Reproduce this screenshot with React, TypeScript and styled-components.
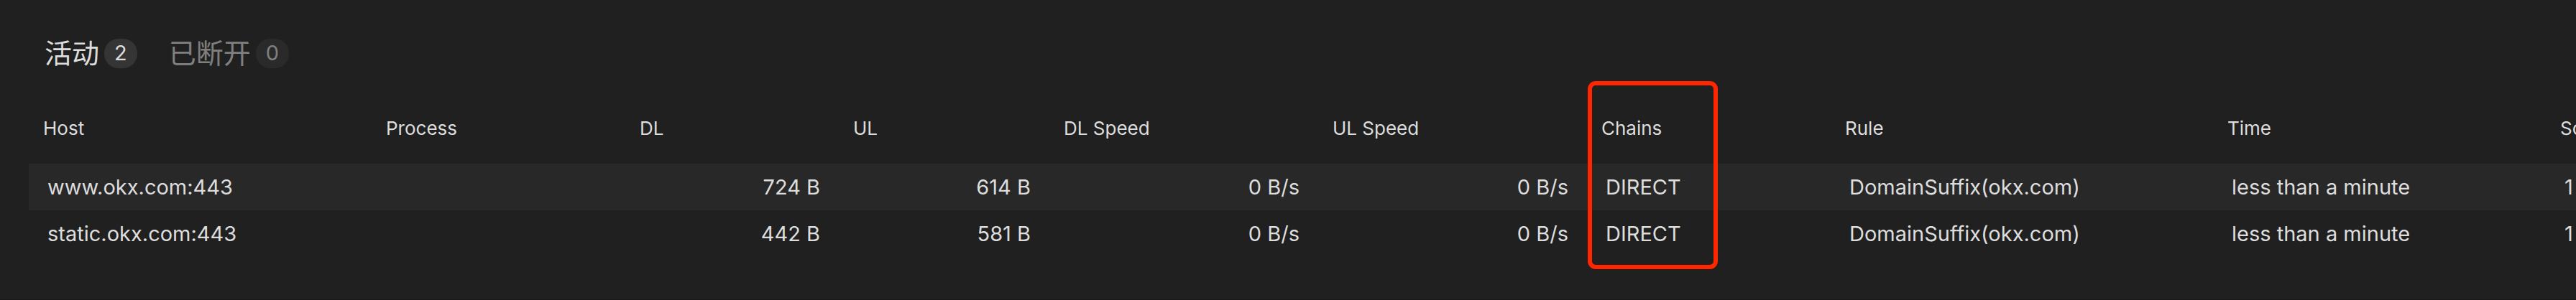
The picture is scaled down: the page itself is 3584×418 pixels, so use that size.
import React, { useState } from "react";
import styled, { createGlobalStyle } from "styled-components";

const GlobalStyle = createGlobalStyle`
  *, *::before, *::after { box-sizing: border-box; }
  body {
    margin: 0;
    background: #202020;
    color: #ddd;
    font-family: Inter, "Noto Sans CJK SC", "Liberation Sans", sans-serif;
  }
`;

const Page = styled.main`
  display: flex;
  flex-direction: column;
  min-height: 100vh;
  border-bottom: 1px solid #181818;
  overflow: hidden;
`;

const TabList = styled.div`
  display: flex;
  gap: 24px;
  padding: 44px 52px 0;
`;

const Tab = styled.button<{ $active: boolean }>`
  display: flex;
  align-items: center;
  gap: 7px;
  height: 60px;
  padding: 0 10px;
  border: 0;
  background: none;
  color: #ddd;
  font-family: Inter, "Noto Sans CJK SC", sans-serif;
  font-size: 38px;
  font-weight: 400;
  line-height: 38px;
  opacity: ${(p) => (p.$active ? 1 : 0.5)};
  cursor: pointer;
`;

const Count = styled.span`
  display: inline-flex;
  align-items: center;
  justify-content: center;
  height: 41px;
  padding: 0 14px;
  border-radius: 20px;
  background: #353535;
  font-size: 29px;
`;

const TableArea = styled.section`
  padding: 24px 0 24px 40px;
  overflow: hidden;
`;

const Table = styled.table`
  table-layout: fixed;
  width: max-content;
  border-collapse: collapse;
`;

const Col = styled.col<{ $width: number }>`
  width: ${(p) => p.$width}px;
`;

const HeadCell = styled.th`
  position: relative;
  height: 100px;
  padding: 0 20px;
  font-size: 26px;
  font-weight: 400;
  text-align: left;
  white-space: nowrap;
`;

const Row = styled.tr`
  &:nth-child(odd) { background: #282828; }
`;

const Cell = styled.td<{ $numeric?: boolean }>`
  height: 65px;
  padding: 0 26px;
  font-size: 29px;
  text-align: ${(p) => (p.$numeric ? "right" : "left")};
  white-space: nowrap;
`;

/* Highlight laid over the Chains column. */
const Marker = styled.span`
  position: absolute;
  top: -15px;
  left: 1px;
  width: 181px;
  height: 262px;
  border: 6px solid #ff2600;
  border-radius: 11px;
  pointer-events: none;
`;

type Column = { key: string; label: string; width: number; numeric?: boolean; marked?: boolean };

const columns: Column[] = [
  { key: "host", label: "Host", width: 477 },
  { key: "process", label: "Process", width: 353 },
  { key: "dl", label: "DL", width: 297, numeric: true },
  { key: "ul", label: "UL", width: 293, numeric: true },
  { key: "dlSpeed", label: "DL Speed", width: 374, numeric: true },
  { key: "ulSpeed", label: "UL Speed", width: 374, numeric: true },
  { key: "chains", label: "Chains", width: 339, marked: true },
  { key: "rule", label: "Rule", width: 532 },
  { key: "time", label: "Time", width: 463 },
  { key: "source", label: "Source", width: 420 },
];

const shared = {
  process: "",
  dlSpeed: "0 B/s",
  ulSpeed: "0 B/s",
  chains: "DIRECT",
  rule: "DomainSuffix(okx.com)",
  time: "less than a minute",
  source: "1",
};

const connections: Record<string, string>[] = [
  { ...shared, host: "www.okx.com:443", dl: "724 B", ul: "614 B" },
  { ...shared, host: "static.okx.com:443", dl: "442 B", ul: "581 B" },
];

const tabs = [
  { label: "活动", count: 2 },
  { label: "已断开", count: 0 },
];

export default function App() {
  const [active, setActive] = useState(0);
  return (
    <Page>
      <GlobalStyle />
      <TabList role="tablist">
        {tabs.map((tab, i) => (
          <Tab
            key={tab.label}
            type="button"
            role="tab"
            aria-selected={i === active}
            $active={i === active}
            onClick={() => setActive(i)}
          >
            {tab.label}
            <Count>{tab.count}</Count>
          </Tab>
        ))}
      </TabList>
      <TableArea>
        <Table>
          <colgroup>
            {columns.map((c) => (
              <Col key={c.key} $width={c.width} />
            ))}
          </colgroup>
          <thead>
            <tr>
              {columns.map((c) => (
                <HeadCell key={c.key} scope="col">
                  {c.label}
                  {c.marked && <Marker />}
                </HeadCell>
              ))}
            </tr>
          </thead>
          <tbody>
            {connections.map((row) => (
              <Row key={row.host}>
                {columns.map((c) => (
                  <Cell key={c.key} $numeric={c.numeric}>
                    {row[c.key]}
                  </Cell>
                ))}
              </Row>
            ))}
          </tbody>
        </Table>
      </TableArea>
    </Page>
  );
}
